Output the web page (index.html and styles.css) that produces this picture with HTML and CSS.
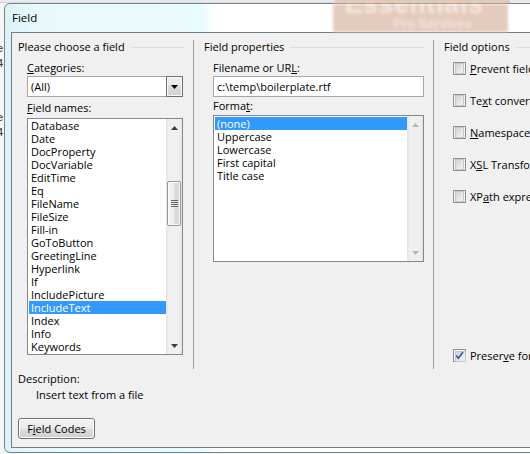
FILE: index.html
```
<!DOCTYPE html>
<html>
<head>
<meta charset="utf-8">
<link rel="stylesheet" href="styles.css">
</head>
<body>
<div class="desk">
  <div class="topstrip"><div class="ts-a"></div><div class="ts-peach"></div></div>
  <div class="deskrow">
    <div class="leftstrip">
      <div class="frag f1">[</div>
      <div class="frag f2">e</div>
      <div class="frag f3">4</div>
      <div class="frag f4">e</div>
      <div class="frag f5">4</div>
    </div>
    <div class="window">
      <div class="titlebar">
        <div class="title">Field</div>
        <div class="ghost"><div class="g-big">Essentials</div><div class="g-small">Pro Services</div></div>
      </div>
      <div class="client">
        <div class="groups">
          <section class="group g1">
            <div class="ghead">Please choose a field</div>
            <div class="gbody">
              <div class="lbl l-first"><u>C</u>ategories:</div>
              <div class="combo">
                <div class="val">(All)</div>
                <div class="ddbtn"><svg width="7" height="4" viewBox="0 0 7 4"><path d="M0 0H7L3.5 4Z" fill="#000"/></svg></div>
              </div>
              <div class="lbl l-names"><u>F</u>ield names:</div>
              <div class="list names">
                <div class="items">
                  <div class="item">Database</div>
                  <div class="item">Date</div>
                  <div class="item">DocProperty</div>
                  <div class="item">DocVariable</div>
                  <div class="item">EditTime</div>
                  <div class="item">Eq</div>
                  <div class="item">FileName</div>
                  <div class="item">FileSize</div>
                  <div class="item">Fill-in</div>
                  <div class="item">GoToButton</div>
                  <div class="item">GreetingLine</div>
                  <div class="item">Hyperlink</div>
                  <div class="item">If</div>
                  <div class="item">IncludePicture</div>
                  <div class="item sel">IncludeText</div>
                  <div class="item">Index</div>
                  <div class="item">Info</div>
                  <div class="item">Keywords</div>
                </div>
                <div class="sb">
                  <div class="sbtn"><svg width="7" height="4" viewBox="0 0 7 4"><path d="M3.5 0L7 4H0Z" fill="#3c3c3c"/></svg></div>
                  <div class="track">
                    <div class="thumb"><svg width="7" height="7" viewBox="0 0 7 7"><path d="M0 .5H7M0 2.5H7M0 4.5H7M0 6.5H7" stroke="#6b6b6b" stroke-width="1"/></svg></div>
                  </div>
                  <div class="sbtn"><svg width="7" height="4" viewBox="0 0 7 4"><path d="M0 0H7L3.5 4Z" fill="#3c3c3c"/></svg></div>
                </div>
              </div>
            </div>
          </section>
          <section class="group g2">
            <div class="ghead">Field properties</div>
            <div class="gbody">
              <div class="lbl l-first">Filename or UR<u>L</u>:</div>
              <div class="input">c:\temp\boilerplate.rtf</div>
              <div class="lbl l-format">Forma<u>t</u>:</div>
              <div class="list fmt">
                <div class="items">
                  <div class="item sel">(none)</div>
                  <div class="item">Uppercase</div>
                  <div class="item">Lowercase</div>
                  <div class="item">First capital</div>
                  <div class="item">Title case</div>
                </div>
                <div class="sb">
                  <div class="sbtn"><svg width="7" height="4" viewBox="0 0 7 4"><path d="M3.5 0L7 4H0Z" fill="#b4b4b4"/></svg></div>
                  <div class="track"></div>
                  <div class="sbtn"><svg width="7" height="4" viewBox="0 0 7 4"><path d="M0 0H7L3.5 4Z" fill="#b4b4b4"/></svg></div>
                </div>
              </div>
            </div>
          </section>
          <section class="group g3">
            <div class="ghead">Field options</div>
            <div class="gbody">
              <div class="cb"><span class="box"></span><span><u>P</u>revent field formatting changes</span></div>
              <div class="cb"><span class="box"></span><span>Te<u>x</u>t converter</span></div>
              <div class="cb"><span class="box"></span><span><u>N</u>amespace mappings</span></div>
              <div class="cb"><span class="box"></span><span>X<u>S</u>L Transformation</span></div>
              <div class="cb"><span class="box"></span><span>XP<u>a</u>th expression</span></div>
              <div class="cb last"><span class="box checked"><svg width="9" height="9" viewBox="0 0 9 9"><path d="M1.2 4.6L3.4 7.2L8 1" fill="none" stroke="#3b5aa8" stroke-width="1.7"/></svg></span><span>Preser<u>v</u>e formatting during updates</span></div>
            </div>
          </section>
        </div>
        <div class="desc">
          <div class="lbl">Description:</div>
          <div class="lbl dtext">Insert text from a file</div>
        </div>
        <button class="fcbtn">F<u>i</u>eld Codes</button>
      </div>
    </div>
  </div>
</div>
</body>
</html>
```
FILE: styles.css
```
* { box-sizing: border-box; }
html, body { margin: 0; padding: 0; }
body {
  width: 530px;
  height: 454px;
  overflow: hidden;
  background: #eef8fa;
  font-family: "Open Sans", "Noto Sans", sans-serif;
  font-size: 11px;
  color: #000;
}
u { text-decoration: underline; text-underline-offset: 1px; }

.desk { display: flex; flex-direction: column; height: 454px; }
.topstrip { height: 3px; flex: none; display: flex; background: #e9eaea; }
.ts-a { width: 335px; flex: none; border-bottom: 1px solid #d8d8d8; }
.ts-peach { width: 175px; flex: none; background: #e4c8b8; }

.deskrow { display: flex; flex: 1; min-height: 0; }
.leftstrip { width: 4px; flex: none; overflow: hidden; font: 11px "Liberation Sans", sans-serif; color: #333; background: #f6f6f6; }
.frag { height: 12px; line-height: 12px; text-indent: -3px; }
.f1 { margin-top: 24px; }
.f2 { margin-top: 3px; }
.f3 { margin-top: 3px; }
.f4 { margin-top: 42px; }
.f5 { margin-top: 3px; }

.window {
  width: 620px;
  height: 450px;
  flex: none;
  border: 1px solid #76848f;
  border-radius: 6px 0 0 6px;
  padding: 0 0 4px 6px;
  display: flex;
  flex-direction: column;
  background: linear-gradient(to right, #dcf2f5 0px, #e6fafc 30px, #e8fbfd 195px, #f6fdfe 206px, #ffffff 215px);
}
.titlebar { height: 28px; flex: none; display: flex; }
.title { width: 322px; flex: none; padding-left: 1px; padding-top: 6px; line-height: 15px; font-size: 11.5px; }
.ghost { width: 175px; flex: none; background: #e5cbbd; overflow: hidden; color: rgba(255,255,255,0.55); filter: blur(1.4px); }
.g-big { font: bold 26px "Liberation Sans", sans-serif; line-height: 20px; margin-top: -10px; padding-left: 12px; letter-spacing: 1px; }
.g-small { font: bold 13px "Liberation Sans", sans-serif; line-height: 14px; margin-top: 3px; padding-left: 60px; color: rgba(255,255,255,0.45); }

.client {
  height: 416px;
  flex: none;
  border: 1px solid #6f7c88;
  background: #f0f0f0;
  padding: 7px 0 0 6px;
  display: flex;
  flex-direction: column;
  align-items: flex-start;
}
.groups { display: flex; height: 329px; flex: none; }
.group { display: flex; flex-direction: column; flex: none; }
.g1 { width: 176px; border-right: 1px solid #a0a0a0; }
.g2 { width: 240px; border-right: 1px solid #a0a0a0; padding-left: 10px; }
.g3 { width: 200px; padding-left: 10px; padding-bottom: 7px; }

.ghead { height: 14px; line-height: 14px; display: flex; align-items: center; white-space: nowrap; padding-right: 9px; }
.ghead::after { content: ""; flex: 1; height: 1px; background: #d5dfe5; margin-left: 6px; }

.gbody { padding-left: 9px; display: flex; flex-direction: column; align-items: flex-start; }
.g3 .gbody { flex: 1; }
.lbl { height: 14px; line-height: 14px; white-space: nowrap; }
.l-first { margin-top: 7px; }
.l-names { margin-top: 4px; }
.l-format { margin-top: 2px; }

.combo { width: 156px; height: 21px; margin-top: 1px; border: 1px solid #a6a6a6; background: #fff; display: flex; }
.combo .val { flex: 1; padding-left: 3px; line-height: 19px; }
.ddbtn {
  width: 17px; margin: -1px -1px -1px 0;
  border: 1px solid #707070;
  background: linear-gradient(#f1f1f1, #e6e6e6 50%, #dadada 50%, #d2d2d2);
  box-shadow: inset 0 0 0 1px #f7f7f7;
  display: flex; align-items: center; justify-content: center;
}

.input { width: 211px; height: 21px; margin-top: 1px; border: 1px solid #a6a6a6; background: #fff; padding-left: 3px; line-height: 19px; white-space: nowrap; }

.list { border: 1px solid #828790; background: #fff; display: flex; }
.list.names { width: 156px; height: 237px; margin-top: 3px; }
.list.fmt { width: 211px; height: 147px; margin-top: 2px; }
.items { flex: 1; padding-left: 1px; overflow: hidden; }
.fmt .items { padding-top: 1px; }
.item { height: 13px; line-height: 13px; padding-left: 2px; white-space: nowrap; }
.item.sel { background: #3399ff; color: #fff; }

.sb { width: 16px; flex: none; display: flex; flex-direction: column; background: linear-gradient(to right, #e3e3e3, #f0f0f0 3px, #f0f0f0 13px, #e3e3e3); }
.sbtn { height: 17px; flex: none; display: flex; align-items: center; justify-content: center; }
.track { flex: 1; }
.thumb {
  margin: 45px 0 0 1px;
  width: 14px; height: 45px;
  border: 1px solid #979797;
  border-radius: 2px;
  background: linear-gradient(to right, #f4f4f4, #ececec 50%, #dedede 50%, #d6d6d6);
  box-shadow: inset 0 0 0 1px #fbfbfb;
  display: flex; align-items: center; justify-content: center;
}

.cb { display: flex; align-items: center; height: 13px; gap: 4px; white-space: nowrap; line-height: 14px; }
.cb:first-child { margin-top: 8px; }
.cb + .cb { margin-top: 19px; }
.cb.last { margin-top: auto; }
.box {
  width: 13px; height: 13px; flex: none;
  border: 1px solid #8e8f8f;
  background: #f4f4f4;
  padding: 1px;
  display: flex; align-items: center; justify-content: center;
  position: relative;
}
.box::before {
  content: ""; display: block; width: 9px; height: 9px;
  border: 1px solid #c4c7cb;
  background: linear-gradient(135deg, #cfd3d8, #eeeeef 80%);
}
.box.checked::before { position: absolute; left: 1px; top: 1px; }
.box.checked svg { position: relative; }

.desc { margin-top: 3px; }
.dtext { margin-top: 2px; padding-left: 18px; }

.fcbtn {
  margin-top: 16px;
  width: 77px; height: 21px;
  border: 1px solid #707070;
  border-radius: 3px;
  background: linear-gradient(#f2f2f2, #ebebeb 50%, #dddddd 50%, #cfcfcf);
  box-shadow: inset 0 0 0 1px #fbfbfb;
  font: inherit;
  color: #000;
  padding: 0;
  text-align: center;
  line-height: 19px;
}
```
